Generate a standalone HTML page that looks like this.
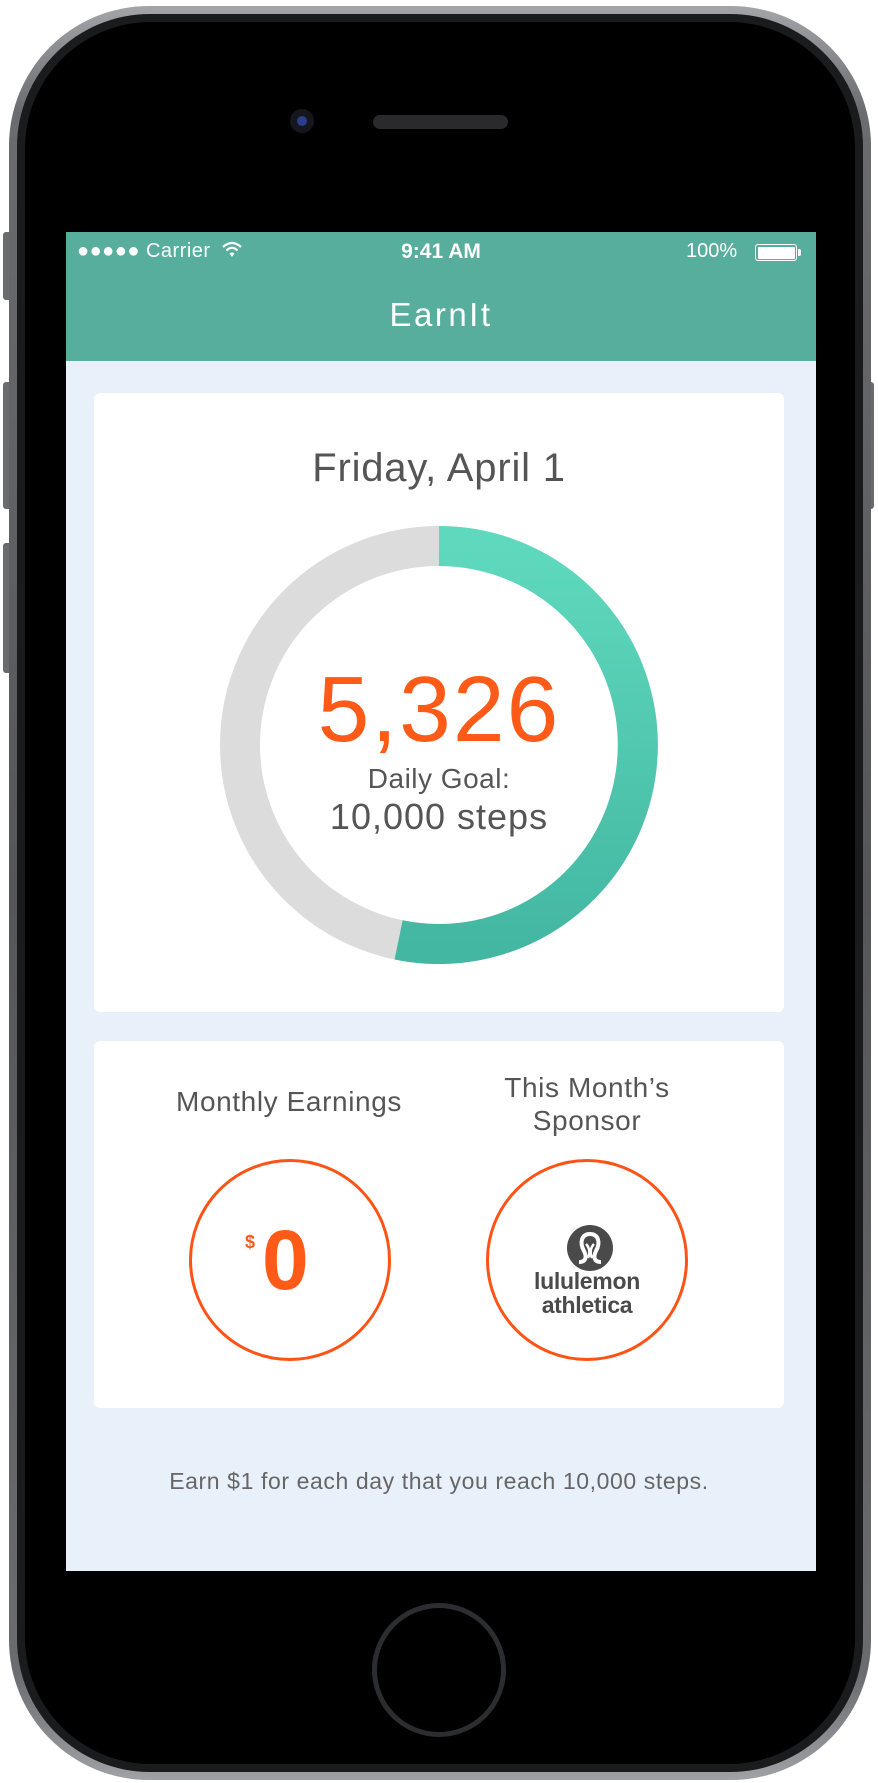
<!DOCTYPE html>
<html><head><meta charset="utf-8"><style>
*{margin:0;padding:0;box-sizing:border-box}
body{width:878px;height:1783px;background:#fff;position:relative;overflow:hidden;font-family:"Liberation Sans","DejaVu Sans",sans-serif}
.abs{position:absolute}
.t{position:absolute;left:0;width:100%;text-align:center;white-space:nowrap}
</style></head><body>
<div class="abs" style="left:3px;top:232px;width:10px;height:68px;background:#6a6b6f;border-radius:3px"></div>
<div class="abs" style="left:3px;top:382px;width:10px;height:127px;background:#6a6b6f;border-radius:3px"></div>
<div class="abs" style="left:3px;top:543px;width:10px;height:130px;background:#6a6b6f;border-radius:3px"></div>
<div class="abs" style="left:864px;top:382px;width:10px;height:127px;background:#6a6b6f;border-radius:3px"></div>
<div class="abs" style="left:9px;top:6px;width:862px;height:1774px;border-radius:140px;background:linear-gradient(#a4a5a9,#6b6c70 6%,#55565a 50%,#6b6c70 94%,#a0a1a5);"></div>
<div class="abs" style="left:17px;top:14px;width:846px;height:1758px;border-radius:133px;background:#1a1b1d"></div>
<div class="abs" style="left:25px;top:22px;width:830px;height:1742px;border-radius:126px;background:#000"></div>
<div class="abs" style="left:290px;top:109px;width:24px;height:24px;border-radius:50%;background:#15171c"></div>
<div class="abs" style="left:297px;top:116px;width:10px;height:10px;border-radius:50%;background:#2a3e8a"></div>
<div class="abs" style="left:373px;top:115px;width:135px;height:14px;border-radius:7px;background:#2a2a2c"></div>
<div class="abs" style="left:372px;top:1603px;width:134px;height:134px;border-radius:50%;border:5px solid #2c2d31"></div>
<div class="abs" style="left:66px;top:232px;width:750px;height:1339px;background:#e8f0f9"></div>
<div class="abs" style="left:66px;top:232px;width:750px;height:129px;background:#58ae9c;color:#fff">
  <div class="abs" style="left:11px;top:8px;font-size:20px;letter-spacing:0.5px">●●●●● Carrier
    <svg width="22" height="18" viewBox="0 0 22 18" style="vertical-align:-2px;margin-left:4px"><path d="M2 6 Q11 -2 20 6" stroke="#fff" stroke-width="2.2" fill="none"/><path d="M5.5 9.5 Q11 4 16.5 9.5" stroke="#fff" stroke-width="2.2" fill="none"/><path d="M8.5 12.5 L11 16 L13.5 12.5 Q11 10.5 8.5 12.5Z" fill="#fff"/></svg></div>
  <div class="t" style="top:8px;font-size:21px;font-weight:bold">9:41 AM</div>
  <div class="abs" style="left:620px;top:8px;font-size:20px">100%</div>
  <div class="abs" style="left:689px;top:12px;width:42px;height:17px;border:1.5px solid #fff;border-radius:3px;padding:1.5px"><div style="width:100%;height:100%;background:#fff;border-radius:1px"></div></div>
  <div class="abs" style="left:732px;top:17px;width:3px;height:7px;background:#fff;border-radius:0 2px 2px 0"></div>
  <div class="t" style="top:64px;font-size:33px;letter-spacing:2.5px">EarnIt</div>
</div>
<div class="abs" style="left:94px;top:393px;width:690px;height:619px;background:#fff;border-radius:6px"></div>
<div class="t" style="top:446px;font-size:40px;color:#555;letter-spacing:0.8px">Friday, April 1</div>
<svg class="abs" style="left:220px;top:526px" width="438" height="438" viewBox="0 0 438 438">
<defs><linearGradient id="g" gradientUnits="userSpaceOnUse" x1="0" y1="20" x2="0" y2="418"><stop offset="0" stop-color="#5fd9bd"/><stop offset="1" stop-color="#43b7a2"/></linearGradient></defs>
<circle cx="219" cy="219" r="199" fill="none" stroke="#dcdcdc" stroke-width="40"/>
<path d="M219 20 A199 199 0 1 1 178.6 413.9" fill="none" stroke="url(#g)" stroke-width="40"/>
</svg>
<div class="t" style="top:656px;font-size:93px;color:#ff5a17;letter-spacing:2px">5,326</div>
<div class="t" style="top:763px;font-size:28px;color:#555;letter-spacing:0.5px">Daily Goal:</div>
<div class="t" style="top:796px;font-size:36px;color:#555;letter-spacing:1px">10,000 steps</div>
<div class="abs" style="left:94px;top:1041px;width:690px;height:367px;background:#fff;border-radius:6px"></div>
<div class="abs" style="left:139px;top:1086px;width:300px;text-align:center;font-size:28px;color:#555;letter-spacing:0.6px">Monthly Earnings</div>
<div class="abs" style="left:437px;top:1071px;width:300px;text-align:center;font-size:28px;color:#555;line-height:33px;letter-spacing:0.6px">This Month’s<br>Sponsor</div>
<div class="abs" style="left:189px;top:1159px;width:202px;height:202px;border-radius:50%;border:3.5px solid #ff5315"></div>
<div class="abs" style="left:486px;top:1159px;width:202px;height:202px;border-radius:50%;border:3.5px solid #ff5315"></div>
<div class="abs" style="left:245px;top:1232px;font-size:18px;font-weight:bold;color:#ff5a17">$</div>
<div class="abs" style="left:262px;top:1215px;font-size:84px;font-weight:bold;color:#ff5a17;line-height:90px">0</div>
<svg class="abs" style="left:566px;top:1224px" width="48" height="48" viewBox="0 0 48 48"><circle cx="24" cy="24" r="23" fill="#4a4a4a"/><path d="M13 38 C20 38 21 33 18 27 C13 18 16 10 24 10 C32 10 35 18 30 27 C27 33 28 38 35 38" stroke="#fff" stroke-width="4" fill="none"/><path d="M22 34 C24 30 24 24 20 20 M26 34 C24 30 24 24 28 20" stroke="#fff" stroke-width="2.5" fill="none"/></svg>
<div class="abs" style="left:487px;top:1269px;width:200px;text-align:center;font-size:23px;color:#4a4a4a;line-height:24px;font-weight:bold;letter-spacing:-0.3px">lululemon<br>athletica</div>
<div class="t" style="top:1468px;font-size:23px;color:#666;letter-spacing:0.6px">Earn $1 for each day that you reach 10,000 steps.</div>
</body></html>
